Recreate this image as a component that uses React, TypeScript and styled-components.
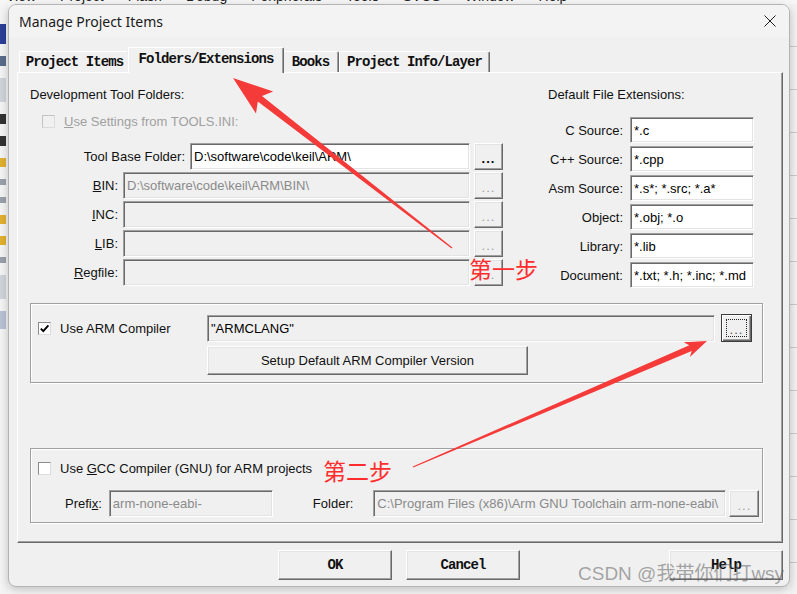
import React from 'react';
import styled, { createGlobalStyle, css } from 'styled-components';

const GlobalStyle = createGlobalStyle`
  html, body {
    margin: 0;
    padding: 0;
    background: #ececec;
  }
  body {
    font-family: "Liberation Sans", Arial, sans-serif;
    font-size: 13px;
    color: #000;
  }
`;

// ---------- IDE behind the dialog ----------
const Desktop = styled.div`
  position: relative;
  width: 797px;
  height: 594px;
  overflow: hidden;
  display: flex;
  flex-direction: column;
  background: #ececec;
`;

const MenuStrip = styled.div`
  height: 4px;
  overflow: hidden;
  display: flex;
  gap: 24px;
  padding-left: 6px;
  background: #f6f6f6;
  span {
    display: block;
    margin-top: -11px;
    font-size: 14px;
    line-height: 14px;
    color: #222;
  }
`;

const IdeBody = styled.div`
  flex: 1;
  display: flex;
`;

const SidePane = styled.div`
  width: 8px;
  display: flex;
  flex-direction: column;
  gap: 12px;
  padding-top: 20px;
  background: #f4f4f4;
`;

const SideChip = styled.div<{ $color: string; $h: number }>`
  width: 6px;
  height: ${p => p.$h}px;
  background: ${p => p.$color};
`;

const Workspace = styled.div`
  flex: 1;
  background: #f7f7f7;
`;

const RightPane = styled.div`
  width: 7px;
  background: repeating-linear-gradient(to bottom, #f2f2f2 0 42px, #c9c9c9 42px 43px);
`;

// ---------- dialog frame ----------
const Dialog = styled.div`
  position: absolute;
  left: 8px;
  top: 4px;
  width: 782px;
  height: 583px;
  box-sizing: border-box;
  display: flex;
  flex-direction: column;
  background: #f0f0f0;
  border: 1px solid #b4b4b4;
  border-radius: 8px;
  box-shadow: 0 3px 10px rgba(0, 0, 0, 0.22);
  overflow: hidden;
`;

const TitleBar = styled.div`
  height: 32px;
  display: flex;
  align-items: center;
  justify-content: space-between;
  padding-left: 10px;
  background: #f3f3f3;
`;

const Title = styled.div`
  font-family: "Noto Sans", "Open Sans", sans-serif;
  font-size: 14px;
  color: #1a1a1a;
`;

const CloseBox = styled.div`
  width: 38px;
  height: 32px;
  display: flex;
  align-items: center;
  justify-content: center;
`;

const Body = styled.div`
  flex: 1;
  display: flex;
  flex-direction: column;
  padding: 10px 6px 0 8px;
`;

// ---------- tabs ----------
const TabStrip = styled.div`
  position: relative;
  z-index: 1;
  height: 26px;
  margin-bottom: -1px;
  display: flex;
  align-items: flex-end;
  padding-left: 2px;
`;

const Tab = styled.div<{ $width: number; $active?: boolean }>`
  box-sizing: border-box;
  width: ${p => (p.$active ? p.$width + 4 : p.$width)}px;
  height: ${p => (p.$active ? 26 : 21)}px;
  margin: ${p => (p.$active ? '0 -2px' : '0 0 1px 0')};
  display: flex;
  align-items: center;
  justify-content: center;
  padding-bottom: ${p => (p.$active ? 3 : 0)}px;
  background: #f0f0f0;
  border-top: 1px solid #fff;
  border-left: 1px solid #fff;
  border-right: 1px solid #696969;
  box-shadow: inset -1px 0 0 #a0a0a0;
  border-radius: 2px 2px 0 0;
  font-family: "Liberation Mono", "Courier New", monospace;
  font-weight: bold;
  font-size: 14px;
  letter-spacing: -0.9px;
  color: #111;
  white-space: nowrap;
  position: relative;
  z-index: ${p => (p.$active ? 2 : 1)};
`;

const Panel = styled.div`
  box-sizing: border-box;
  width: 766px;
  height: 471px;
  padding: 14px 0 0 12px;
  border-top: 1px solid #fff;
  border-left: 1px solid #fff;
  border-right: 1px solid #696969;
  border-bottom: 1px solid #696969;
  box-shadow: inset -1px -1px 0 #a0a0a0;
`;

// ---------- panel content ----------
const TopSection = styled.div`
  display: grid;
  grid-template-columns: 473px 206px;
  column-gap: 45px;
  align-items: start;
`;

const Column = styled.div`
  display: flex;
  flex-direction: column;
`;

const Heading = styled.div`
  line-height: 16px;
  color: #111;
`;

const CheckLine = styled.label<{ $indent?: number; $dim?: boolean }>`
  display: flex;
  align-items: center;
  gap: 9px;
  height: 16px;
  padding-left: ${p => p.$indent ?? 0}px;
  color: ${p => (p.$dim ? '#a0a0a0' : '#111')};
  white-space: nowrap;
`;

const Check = styled.span<{ $disabled?: boolean }>`
  box-sizing: border-box;
  width: 13px;
  height: 13px;
  display: flex;
  align-items: center;
  justify-content: center;
  background: ${p => (p.$disabled ? '#f0f0f0' : '#fff')};
  border-top: 1px solid ${p => (p.$disabled ? '#c4c4c4' : '#8a8a8a')};
  border-left: 1px solid ${p => (p.$disabled ? '#c4c4c4' : '#8a8a8a')};
  border-right: 1px solid #dcdcdc;
  border-bottom: 1px solid #dcdcdc;
`;

const FolderList = styled.div`
  display: flex;
  flex-direction: column;
  gap: 2px;
  margin-top: 14px;
`;

const FolderRow = styled.div`
  height: 27px;
  display: flex;
  align-items: center;
  justify-content: flex-end;
`;

const RowLabel = styled.span<{ $before?: number; $after?: number }>`
  margin-left: ${p => p.$before ?? 0}px;
  margin-right: ${p => p.$after ?? 5}px;
  color: #111;
  white-space: nowrap;
`;

type Tone = 'edit' | 'disabled' | 'readonly';

const Field = styled.div<{ $width: number; $tone?: Tone; $h?: number }>`
  box-sizing: border-box;
  width: ${p => p.$width}px;
  height: ${p => p.$h ?? 27}px;
  display: flex;
  align-items: center;
  padding: 0 3px;
  overflow: hidden;
  white-space: nowrap;
  background: ${p => (p.$tone === 'edit' || !p.$tone ? '#fff' : '#f0f0f0')};
  color: ${p => (p.$tone === 'disabled' ? '#8a8a8a' : '#000')};
  border-top: 1px solid #a0a0a0;
  border-left: 1px solid #a0a0a0;
  border-right: 1px solid #fff;
  border-bottom: 1px solid #fff;
  box-shadow: inset 1px 1px 0 #696969, inset -1px -1px 0 #e3e3e3;
`;

const Browse = styled.div<{ $disabled?: boolean; $focused?: boolean; $w?: number; $h?: number; $gap?: number }>`
  position: relative;
  box-sizing: border-box;
  flex: none;
  width: ${p => p.$w ?? 29}px;
  height: ${p => p.$h ?? 27}px;
  margin-left: ${p => p.$gap ?? 4}px;
  display: flex;
  align-items: center;
  justify-content: center;
  padding-top: 3px;
  background: #f0f0f0;
  border-top: 1px solid #fff;
  border-left: 1px solid #fff;
  border-right: 1px solid #696969;
  border-bottom: 1px solid #696969;
  box-shadow: inset -1px -1px 0 #a0a0a0, inset 1px 1px 0 #e3e3e3;
  font-family: "Liberation Sans", Arial, sans-serif;
  font-size: 13px;
  font-weight: ${p => (p.$disabled ? 'normal' : 'bold')};
  letter-spacing: 1px;
  color: ${p => (p.$disabled ? '#a0a0a0' : '#000')};
  ${p =>
    p.$focused &&
    css`
      border: 1px solid #3c3c3c;
      box-shadow: inset 1px 1px 0 #fff, inset -1px -1px 0 #696969, inset -2px -2px 0 #a0a0a0;
      font-weight: normal;
      color: #555;
      &::after {
        content: '';
        position: absolute;
        inset: 4px;
        border: 1px dotted #222;
      }
    `}
`;

const ExtList = styled.div`
  display: flex;
  flex-direction: column;
  gap: 3px;
  margin-top: 14px;
`;

const ExtRow = styled.div`
  display: grid;
  grid-template-columns: 75px 124px;
  column-gap: 7px;
  align-items: center;
  height: 26px;
  span {
    text-align: right;
    color: #111;
    white-space: nowrap;
  }
`;

const GroupBox = styled.div<{ $top: number }>`
  box-sizing: border-box;
  width: 733px;
  margin-top: ${p => p.$top}px;
  border: 1px solid #a0a0a0;
  box-shadow: inset 1px 1px 0 #fff, 1px 1px 0 #fff;
`;

const ArmGrid = styled.div`
  display: grid;
  grid-template-columns: 163px 508px 31px;
  column-gap: 6px;
  row-gap: 4px;
  align-items: center;
  padding: 10px 0 7px 7px;
`;

const WideButton = styled.div<{ $w: number; $h: number; $mono?: boolean }>`
  box-sizing: border-box;
  width: ${p => p.$w}px;
  height: ${p => p.$h}px;
  display: flex;
  align-items: center;
  justify-content: center;
  background: #f0f0f0;
  border-top: 1px solid #fff;
  border-left: 1px solid #fff;
  border-right: 1px solid #696969;
  border-bottom: 1px solid #696969;
  box-shadow: inset -1px -1px 0 #a0a0a0, inset 1px 1px 0 #e3e3e3;
  color: #111;
  white-space: nowrap;
  ${p =>
    p.$mono &&
    css`
      font-family: "Liberation Mono", "Courier New", monospace;
      font-weight: bold;
      font-size: 14px;
      letter-spacing: -0.9px;
    `}
`;

const GccBody = styled.div`
  padding: 11px 0 5px 7px;
`;

const GccRow = styled.div`
  display: flex;
  align-items: center;
  margin-top: 14px;
  padding-left: 27px;
`;

const ButtonRow = styled.div`
  display: flex;
  gap: 14px;
  margin-top: 7px;
  padding-left: 261px;
  & > :last-child {
    margin-left: auto;
  }
`;

// ---------- annotations over the screenshot ----------
const Annotations = styled.div`
  position: absolute;
  inset: 0;
  pointer-events: none;
  svg {
    position: absolute;
    left: 0;
    top: 0;
  }
`;

const StepNote = styled.span<{ $x: number; $y: number }>`
  position: absolute;
  left: ${p => p.$x}px;
  top: ${p => p.$y}px;
  font-family: "Noto Sans CJK SC", sans-serif;
  font-size: 23px;
  line-height: 23px;
  color: #ff2d2d;
`;

const Watermark = styled.span`
  position: absolute;
  left: 578px;
  top: 562px;
  font-family: "Liberation Sans", "Noto Sans CJK SC", sans-serif;
  font-size: 19px;
  line-height: 24px;
  color: rgba(95, 95, 95, 0.55);
  white-space: nowrap;
`;

const CheckMark = () => (
  <svg width="11" height="11" viewBox="0 0 11 11">
    <path d="M1.8 5.6 L4.3 8.2 L9.4 2.4" fill="none" stroke="#000" strokeWidth="1.9" />
  </svg>
);

const CloseIcon = () => (
  <svg width="12" height="12" viewBox="0 0 12 12">
    <path d="M0.5 0.5 L11.5 11.5 M11.5 0.5 L0.5 11.5" stroke="#1f1f1f" strokeWidth="1" />
  </svg>
);

const tabs = [
  { label: 'Project Items', width: 111 },
  { label: 'Folders/Extensions', width: 152, active: true },
  { label: 'Books', width: 57 },
  { label: 'Project Info/Layer', width: 151 },
];

const folders: { label: React.ReactNode; value: string; width: number; tone: Tone }[] = [
  { label: 'Tool Base Folder:', value: 'D:\\software\\code\\keil\\ARM\\', width: 280, tone: 'edit' },
  { label: <><u>B</u>IN:</>, value: 'D:\\software\\code\\keil\\ARM\\BIN\\', width: 347, tone: 'disabled' },
  { label: <><u>I</u>NC:</>, value: '', width: 347, tone: 'disabled' },
  { label: <><u>L</u>IB:</>, value: '', width: 347, tone: 'disabled' },
  { label: <><u>R</u>egfile:</>, value: '', width: 347, tone: 'disabled' },
];

const extensions = [
  ['C Source:', '*.c'],
  ['C++ Source:', '*.cpp'],
  ['Asm Source:', '*.s*; *.src; *.a*'],
  ['Object:', '*.obj; *.o'],
  ['Library:', '*.lib'],
  ['Document:', '*.txt; *.h; *.inc; *.md'],
];

const menuItems = ['View', 'Project', 'Flash', 'Debug', 'Peripherals', 'Tools', 'SVCS', 'Window', 'Help'];

const App = () => {
  return (
    <>
      <GlobalStyle />
      <Desktop>
        <MenuStrip>
          {menuItems.map(m => (
            <span key={m}>{m}</span>
          ))}
        </MenuStrip>
        <IdeBody>
          <SidePane>
            <SideChip $color="#2b3f96" $h={20} />
            <SideChip $color="#5a6a8a" $h={10} />
            <SideChip $color="#cfd3da" $h={24} />
            <SideChip $color="#333" $h={10} />
            <SideChip $color="#333" $h={10} />
            <SideChip $color="#e0b030" $h={9} />
            <SideChip $color="#9aa0aa" $h={6} />
            <SideChip $color="#9aa0aa" $h={6} />
            <SideChip $color="#e0b030" $h={9} />
            <SideChip $color="#e0b030" $h={9} />
            <SideChip $color="#9aa0aa" $h={6} />
            <SideChip $color="#cfd3da" $h={24} />
            <SideChip $color="#b8c2d4" $h={18} />
          </SidePane>
          <Workspace />
          <RightPane />
        </IdeBody>

        <Dialog>
          <TitleBar>
            <Title>Manage Project Items</Title>
            <CloseBox>
              <CloseIcon />
            </CloseBox>
          </TitleBar>

          <Body>
            <TabStrip>
              {tabs.map(t => (
                <Tab key={t.label} $width={t.width} $active={t.active}>
                  {t.label}
                </Tab>
              ))}
            </TabStrip>

            <Panel>
              <TopSection>
                <Column>
                  <Heading>Development Tool Folders:</Heading>
                  <CheckLine $indent={12} $dim style={{ marginTop: 10 }}>
                    <Check $disabled />
                    <span>
                      <u>U</u>se Settings from TOOLS.INI:
                    </span>
                  </CheckLine>
                  <FolderList>
                    {folders.map((f, i) => (
                      <FolderRow key={i}>
                        <RowLabel>{f.label}</RowLabel>
                        <Field $width={f.width} $tone={f.tone}>
                          {f.value}
                        </Field>
                        <Browse $disabled={f.tone === 'disabled'}>...</Browse>
                      </FolderRow>
                    ))}
                  </FolderList>
                </Column>

                <Column>
                  <Heading>Default File Extensions:</Heading>
                  <ExtList>
                    {extensions.map(([label, value]) => (
                      <ExtRow key={label}>
                        <span>{label}</span>
                        <Field $width={124} $h={26}>
                          {value}
                        </Field>
                      </ExtRow>
                    ))}
                  </ExtList>
                </Column>
              </TopSection>

              <GroupBox $top={15}>
                <ArmGrid>
                  <CheckLine>
                    <Check>
                      <CheckMark />
                    </Check>
                    <span>Use ARM Compiler</span>
                  </CheckLine>
                  <Field $width={508} $tone="readonly">
                    "ARMCLANG"
                  </Field>
                  <Browse $focused $w={31} $h={28} $gap={0}>
                    ...
                  </Browse>
                  <span />
                  <WideButton $w={321} $h={29}>
                    Setup Default ARM Compiler Version
                  </WideButton>
                </ArmGrid>
              </GroupBox>

              <GroupBox $top={65}>
                <GccBody>
                  <CheckLine>
                    <Check />
                    <span>
                      Use <u>G</u>CC Compiler (GNU) for ARM projects
                    </span>
                  </CheckLine>
                  <GccRow>
                    <RowLabel $after={7}>
                      Prefi<u>x</u>:
                    </RowLabel>
                    <Field $width={164} $tone="disabled">
                      arm-none-eabi-
                    </Field>
                    <RowLabel $before={40} $after={20}>
                      Folder:
                    </RowLabel>
                    <Field $width={353} $tone="disabled">
                      C:\Program Files (x86)\Arm GNU Toolchain arm-none-eabi\
                    </Field>
                    <Browse $disabled $w={30} $gap={3}>
                      ...
                    </Browse>
                  </GccRow>
                </GccBody>
              </GroupBox>
            </Panel>

            <ButtonRow>
              <WideButton $w={114} $h={30} $mono>
                OK
              </WideButton>
              <WideButton $w={114} $h={30} $mono>
                Cancel
              </WideButton>
              <WideButton $w={114} $h={30} $mono>
                Help
              </WideButton>
            </ButtonRow>
          </Body>
        </Dialog>

        <Annotations>
          <svg width="797" height="594" viewBox="0 0 797 594">
            <polygon
              fill="#f53a3a"
              points="233,78 273.2,91.4 262,96 452.4,247.5 451.6,248.5 257.8,101.6 256,113.6"
            />
            <polygon
              fill="#f53a3a"
              points="707,341 689.9,357 691.7,350.9 413.2,467.6 412.8,466.4 689.3,345.3 683.6,342.3"
            />
          </svg>
          <StepNote $x={469} $y={257}>第一步</StepNote>
          <StepNote $x={323} $y={459}>第二步</StepNote>
          <Watermark>CSDN @我带你们打wsy</Watermark>
        </Annotations>
      </Desktop>
    </>
  );
};

export default App;
